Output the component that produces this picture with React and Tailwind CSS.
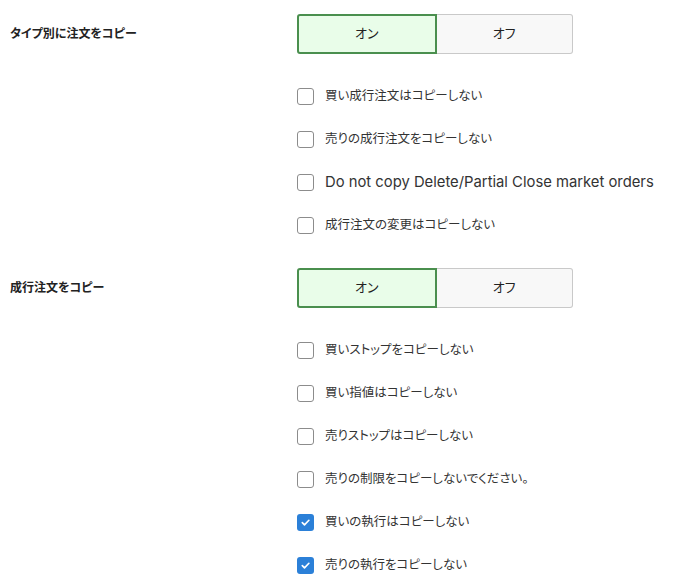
import React from 'react';

const font = { fontFamily: '"Inter", "Noto Sans CJK JP", sans-serif' };

const Toggle = ({ value = 'on' }) => (
    <div className="flex w-[276px] h-10 text-[13px] text-[#222]">
        <div className={value === 'on'
            ? "flex-1 flex items-center justify-center rounded-l-[3px] border-2 border-[#4a8f4e] bg-[#e9fde9]"
            : "flex-1 flex items-center justify-center rounded-l-[3px] border border-[#c9c9c9] bg-[#f8f8f8]"}>
            オン
        </div>
        <div className={value === 'off'
            ? "flex-1 flex items-center justify-center rounded-r-[3px] border-2 border-[#4a8f4e] bg-[#e9fde9]"
            : "flex-1 flex items-center justify-center rounded-r-[3px] border border-l-0 border-[#c9c9c9] bg-[#f8f8f8]"}>
            オフ
        </div>
    </div>
);

const Check = ({ label, checked, latin }) => (
    <div className="h-[43px] flex items-center gap-[11px]">
        {checked ? (
            <span className="w-[17px] h-[17px] rounded-[3px] bg-[#2b80d8] flex items-center justify-center">
                <svg width="11" height="11" viewBox="0 0 12 12" fill="none">
                    <path d="M2.5 6.2l2.4 2.4 4.8-5" stroke="#fff" strokeWidth="1.8" strokeLinecap="round" strokeLinejoin="round" />
                </svg>
            </span>
        ) : (
            <span className="w-[17px] h-[17px] rounded-[3px] border border-[#8c8c8c] bg-white" />
        )}
        <span className={latin ? "text-[14.8px] text-[#333]" : "text-[12.5px] text-[#333]"}>{label}</span>
    </div>
);

const Section = ({ title, items }) => (
    <div className="flex">
        <div className="w-[287px] h-10 flex items-center text-[12px] font-bold text-[#222]">{title}</div>
        <div>
            <Toggle />
            <div className="mt-[21px]">
                {items.map(([label, checked, latin], i) => <Check key={i} label={label} checked={checked} latin={latin} />)}
            </div>
        </div>
    </div>
);

export default function App() {
    return (
        <div className="w-[673px] h-[587px] bg-white pl-[10px] pt-[14px] overflow-hidden [font-feature-settings:'palt']" style={font}>
            <div className="flex flex-col gap-[21px]">
                <Section title="タイプ別に注文をコピー" items={[
                    ['買い成行注文はコピーしない', false],
                    ['売りの成行注文をコピーしない', false],
                    ['Do not copy Delete/Partial Close market orders', false, true],
                    ['成行注文の変更はコピーしない', false],
                ]} />
                <Section title="成行注文をコピー" items={[
                    ['買いストップをコピーしない', false],
                    ['買い指値はコピーしない', false],
                    ['売りストップはコピーしない', false],
                    ['売りの制限をコピーしないでください。', false],
                    ['買いの執行はコピーしない', true],
                    ['売りの執行をコピーしない', true],
                ]} />
            </div>
        </div>
    );
}
